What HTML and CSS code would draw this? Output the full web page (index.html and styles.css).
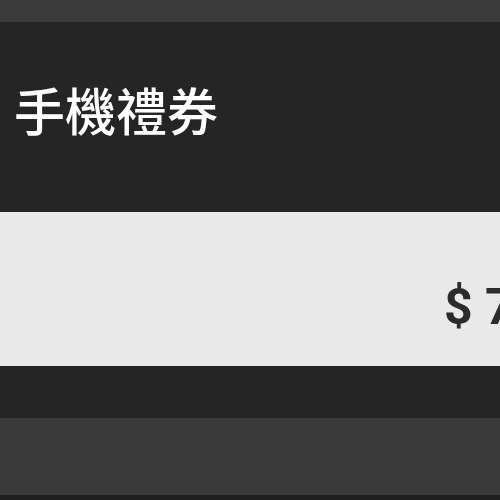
FILE: index.html
```html
<!DOCTYPE html>
<html lang="zh-TW">

<head>
    <meta charset="UTF-8">
    <meta name="viewport" content="width=device-width, initial-scale=1.0">
    <title>手機禮券</title>
    <link rel="stylesheet" href="styles.css">
</head>

<body>
    <div class="status-bar"></div>
    <header class="title-bar">
        <h1>手機禮券</h1>
    </header>
    <div class="voucher-row">
        <span class="price">$ 700</span>
    </div>
    <div class="row-gap"></div>
    <div class="bottom-bar"></div>
    <div class="bottom-edge"></div>
</body>

</html>
```

FILE: styles.css
```css
body {
    margin: 0;
    padding: 0;
    font-family: "Noto Sans CJK TC", "Noto Sans", sans-serif;
    background: #1e1e1e;
    overflow: hidden;
    width: 500px;
    height: 500px;
}

.status-bar {
    height: 22px;
    background: #3b3b3b;
}

.title-bar {
    height: 190px;
    background: #252525;
    display: flex;
    align-items: center;
    padding-left: 14px;
    box-sizing: border-box;
}

h1 {
    margin: 0 0 16px;
    color: #fff;
    font-size: 51px;
    font-weight: 500;
    line-height: 1;
}

.voucher-row {
    height: 154px;
    background: #e9e9e9;
    display: flex;
    align-items: center;
    padding-left: 444px;
    padding-top: 36px;
    box-sizing: border-box;
    white-space: nowrap;
    overflow: hidden;
}

.price {
    font-family: Roboto, "Liberation Sans", sans-serif;
    font-size: 50px;
    font-weight: 700;
    color: #2b2b2b;
    line-height: 1;
}

.row-gap {
    height: 52px;
    background: #252525;
}

.bottom-bar {
    height: 77px;
    background: #3a3a3a;
}

.bottom-edge {
    height: 5px;
    background: #1e1e1e;
}
```
